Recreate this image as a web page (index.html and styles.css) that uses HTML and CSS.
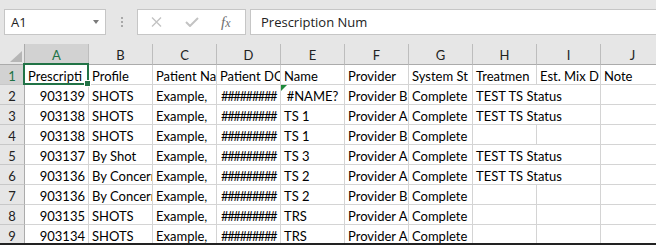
FILE: index.html
```html
<!DOCTYPE html>
<html lang="en">
<head>
    <meta charset="UTF-8">
    <title>Book1 - Excel</title>
    <link rel="stylesheet" href="styles.css">
</head>
<body>

    <!-- name box + formula bar -->
    <div class="toolbar">
        <div class="name-box">
            <span>A1</span>
            <span class="drop"></span>
        </div>
        <div class="grip"><i></i><i></i><i></i></div>
        <div class="fx-buttons">
            <svg class="btn-x" width="11" height="10" viewBox="0 0 11 10"><path d="M1 0.5L10 9.5M10 0.5L1 9.5" stroke="#c3c3c3" stroke-width="1.4" fill="none"/></svg>
            <svg class="btn-ok" width="14" height="10" viewBox="0 0 14 10"><path d="M1 5L5 9L13 1" stroke="#c3c3c3" stroke-width="2" fill="none"/></svg>
            <span class="fx">f<span>x</span></span>
        </div>
        <div class="formula">Prescription Num</div>
    </div>

    <!-- worksheet -->
    <div class="sheet">
        <div class="corner"><span></span></div>
        <div class="col-head sel">A</div>
        <div class="col-head">B</div>
        <div class="col-head">C</div>
        <div class="col-head">D</div>
        <div class="col-head">E</div>
        <div class="col-head">F</div>
        <div class="col-head">G</div>
        <div class="col-head">H</div>
        <div class="col-head">I</div>
        <div class="col-head">J</div>

        <div class="row-head sel">1</div>
        <div class="cell active">Prescripti<span class="handle"></span></div>
        <div class="cell">Profile</div>
        <div class="cell">Patient Na</div>
        <div class="cell">Patient DO</div>
        <div class="cell">Name</div>
        <div class="cell">Provider</div>
        <div class="cell">System St</div>
        <div class="cell">Treatmen</div>
        <div class="cell">Est. Mix D</div>
        <div class="cell">Note</div>

        <div class="row-head">2</div>
        <div class="cell num">903139</div>
        <div class="cell">SHOTS</div>
        <div class="cell">Example,</div>
        <div class="cell hash">#########</div>
        <div class="cell err">#NAME?<span class="flag"></span></div>
        <div class="cell">Provider B</div>
        <div class="cell">Complete</div>
        <div class="cell wide">TEST TS Status</div>
        <div class="cell"></div>

        <div class="row-head">3</div>
        <div class="cell num">903138</div>
        <div class="cell">SHOTS</div>
        <div class="cell">Example,</div>
        <div class="cell hash">#########</div>
        <div class="cell">TS 1</div>
        <div class="cell">Provider A</div>
        <div class="cell">Complete</div>
        <div class="cell wide">TEST TS Status</div>
        <div class="cell"></div>

        <div class="row-head">4</div>
        <div class="cell num">903138</div>
        <div class="cell">SHOTS</div>
        <div class="cell">Example,</div>
        <div class="cell hash">#########</div>
        <div class="cell">TS 1</div>
        <div class="cell">Provider B</div>
        <div class="cell">Complete</div>
        <div class="cell"></div>
        <div class="cell"></div>
        <div class="cell"></div>

        <div class="row-head">5</div>
        <div class="cell num">903137</div>
        <div class="cell">By Shot</div>
        <div class="cell">Example,</div>
        <div class="cell hash">#########</div>
        <div class="cell">TS 3</div>
        <div class="cell">Provider A</div>
        <div class="cell">Complete</div>
        <div class="cell wide">TEST TS Status</div>
        <div class="cell"></div>

        <div class="row-head">6</div>
        <div class="cell num">903136</div>
        <div class="cell">By Concern</div>
        <div class="cell">Example,</div>
        <div class="cell hash">#########</div>
        <div class="cell">TS 2</div>
        <div class="cell">Provider A</div>
        <div class="cell">Complete</div>
        <div class="cell wide">TEST TS Status</div>
        <div class="cell"></div>

        <div class="row-head">7</div>
        <div class="cell num">903136</div>
        <div class="cell">By Concern</div>
        <div class="cell">Example,</div>
        <div class="cell hash">#########</div>
        <div class="cell">TS 2</div>
        <div class="cell">Provider B</div>
        <div class="cell">Complete</div>
        <div class="cell"></div>
        <div class="cell"></div>
        <div class="cell"></div>

        <div class="row-head">8</div>
        <div class="cell num">903135</div>
        <div class="cell">SHOTS</div>
        <div class="cell">Example,</div>
        <div class="cell hash">#########</div>
        <div class="cell">TRS</div>
        <div class="cell">Provider A</div>
        <div class="cell">Complete</div>
        <div class="cell"></div>
        <div class="cell"></div>
        <div class="cell"></div>

        <div class="row-head">9</div>
        <div class="cell num">903134</div>
        <div class="cell">SHOTS</div>
        <div class="cell">Example,</div>
        <div class="cell hash">#########</div>
        <div class="cell">TRS</div>
        <div class="cell">Provider A</div>
        <div class="cell">Complete</div>
        <div class="cell"></div>
        <div class="cell"></div>
        <div class="cell"></div>
    </div>

</body>
</html>
```

FILE: styles.css
```css
body {
    margin: 0;
    background-color: #fff;
    overflow: hidden;
    font-family: 'Lato', sans-serif;
}

/* top bar */
.toolbar {
    height: 44px;
    background-color: #e6e6e6;
    display: flex;
    align-items: flex-start;
    padding: 9px 0 0 4px;
    box-sizing: border-box;
    font-family: 'Open Sans', sans-serif;
    font-size: 13px;
    color: #222;
}
.name-box {
    width: 102px;
    height: 26px;
    background-color: #fff;
    border: 1px solid #c6c6c6;
    box-sizing: border-box;
    display: flex;
    align-items: center;
    justify-content: space-between;
    padding: 0 6px 0 6px;
}
.name-box .drop {
    width: 0;
    height: 0;
    border-left: 3.5px solid transparent;
    border-right: 3.5px solid transparent;
    border-top: 4px solid #7a7a7a;
}
.grip {
    width: 31px;
    height: 26px;
    display: flex;
    flex-direction: column;
    align-items: center;
    justify-content: center;
    gap: 2px;
}
.grip i {
    width: 2px;
    height: 2px;
    background-color: #a8a8a8;
}
.fx-buttons {
    width: 109px;
    height: 26px;
    background-color: #fff;
    border: 1px solid #c6c6c6;
    box-sizing: border-box;
    display: flex;
    align-items: center;
    padding-left: 13px;
}
.btn-ok {
    margin-left: 23px;
}
.fx {
    margin-left: 22px;
    font-family: 'Liberation Serif', serif;
    font-style: italic;
    font-size: 15px;
    color: #6e6e6e;
    line-height: 1;
}
.fx span {
    font-size: 12px;
}
.formula {
    flex: 1;
    margin-left: 4px;
    height: 26px;
    background-color: #fff;
    border: 1px solid #c6c6c6;
    border-right: none;
    box-sizing: border-box;
    padding-left: 10px;
    line-height: 24px;
}

/* grid */
.sheet {
    display: grid;
    grid-template-columns: 25px repeat(10, 64px);
    grid-template-rows: 21px;
    grid-auto-rows: 20px;
    height: 199px;
    overflow: hidden;
    border-bottom: 2px solid #222;
    font-size: 13px;
    color: #000;
}
.corner, .col-head, .row-head, .cell {
    box-sizing: border-box;
    border-right: 1px solid #d4d4d4;
    border-bottom: 1px solid #d4d4d4;
    white-space: nowrap;
    overflow: hidden;
}
.corner {
    background-color: #e6e6e6;
    border-right: 1px solid #ababab;
    border-bottom: 1px solid #ababab;
    position: relative;
}
.corner span {
    position: absolute;
    right: 2px;
    bottom: 2px;
    width: 0;
    height: 0;
    border-left: 12px solid transparent;
    border-bottom: 11px solid #b6b6b6;
}
.col-head {
    background-color: #e6e6e6;
    border-right-color: #bdbdbd;
    border-bottom-color: #ababab;
    text-align: center;
    line-height: 22px;
    color: #222;
}
.row-head {
    background-color: #e6e6e6;
    border-right-color: #ababab;
    border-bottom-color: #c8c8c8;
    text-align: center;
    line-height: 22px;
    color: #222;
}
.col-head.sel, .row-head.sel {
    background-color: #d2d2d2;
    color: #217346;
}
.col-head.sel {
    border-bottom: 1px solid #217346;
}
.cell {
    padding: 0 3px;
    line-height: 23px;
}
.cell.num {
    text-align: right;
}
.cell.hash {
    padding: 0 4px;
    letter-spacing: -1.4px;
}
.cell.err {
    text-align: center;
    position: relative;
}
.cell.wide {
    grid-column: span 2;
}
.cell.active {
    overflow: visible;
    position: relative;
}
.cell.active::before {
    content: "";
    position: absolute;
    left: -2px;
    top: -2px;
    right: -1px;
    bottom: -1px;
    border: 2px solid #217346;
}
.handle {
    position: absolute;
    right: -3px;
    bottom: -3px;
    width: 5px;
    height: 5px;
    background-color: #217346;
    border: 1px solid #fff;
}
.flag {
    position: absolute;
    left: 0;
    top: 0;
    width: 0;
    height: 0;
    border-top: 6px solid #1e8a3b;
    border-right: 6px solid transparent;
}
```
